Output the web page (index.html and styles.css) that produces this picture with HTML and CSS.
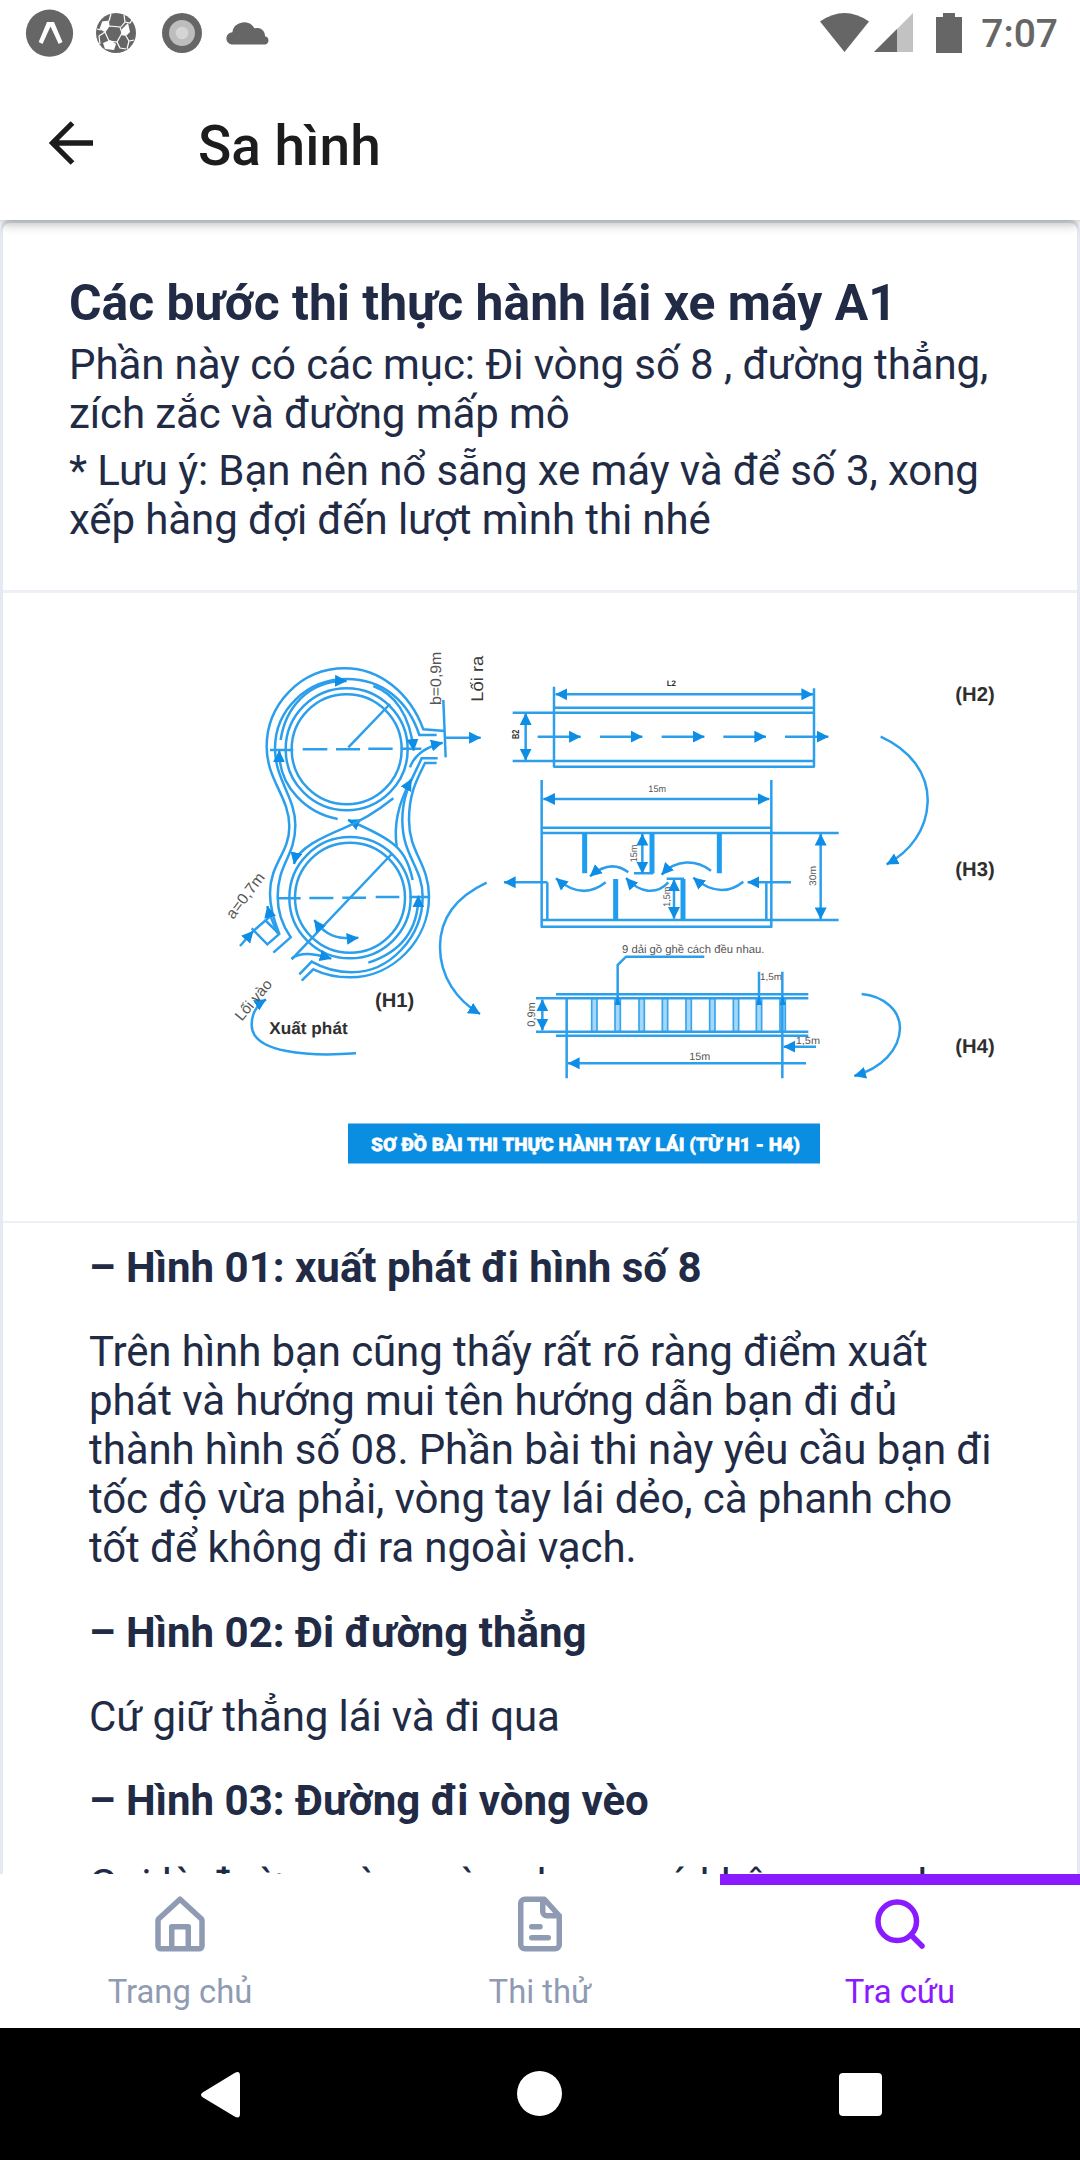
FILE: index.html
```html
<!DOCTYPE html>
<html lang="vi">
<head>
<meta charset="utf-8">
<title>Sa hình</title>
<link rel="stylesheet" href="styles.css">
</head>
<body>
<div class="screen">
  <div class="status-bar">
    <svg class="status-left" width="300" height="66" viewBox="0 0 300 66">
      <circle cx="49.5" cy="33.2" r="23.6" fill="#666"/>
      <path d="M47 22h7l8.500 20-3.800 2-8.200-17.500L42.500 44l-3.800-2z" fill="#fff"/>
      <circle cx="116" cy="33" r="20" fill="#666"/>
      <g fill="#fff">
        <path d="M102 22l7-1 .5 5-5 6-5-3z"/>
        <path d="M122 29l6-6 2 9-4 4-5-1z"/>
        <path d="M103 43l7-3 6 4-2 6-9-1z"/>
      </g>
      <g fill="none" stroke="#fff" stroke-width="1.200">
        <path d="M109 26l11 1 2 6-5 9-8-1-4-9zM109 21l2-7M109 21l-7 1M121 27l4-5-1-7M125 22l5 1 2-3M126 36l3 5 5-1M129 41l-2 8M117 42l3 6 6 1M105 32l-6 4 1 8M97 29l4 1"/>
      </g>
      <circle cx="182" cy="33" r="20" fill="#666"/>
      <circle cx="182" cy="33" r="13" fill="#bdbdbd"/>
      <circle cx="182" cy="33" r="6.300" fill="#d5d5d5"/>
      <path d="M231.500 44.500a6.200 6.200 0 0 1 .8-12.300A12 12 0 0 1 254.500 28.300a8 8 0 0 1 10.500 8 4.200 4.200 0 0 1 .3 8.200z" fill="#666"/>
    </svg>
    <div class="status-right">
      <svg width="150" height="66" viewBox="815 0 150 66">
        <path d="M821 21.500Q845.500 4.500 870 21.500L845.500 52z" fill="#666"/>
        <path d="M914 13v39h-39z" fill="#c2c2c2"/>
        <path d="M898 29v23h-23z" fill="#666"/>
        <path d="M944 13h12v4h7v36h-26V17h7z" fill="#666"/>
      </svg>
      <span class="clock">7:07</span>
    </div>
  </div>

  <header class="app-bar">
    <svg class="back" width="44" height="44" viewBox="0 0 44 44">
      <path d="M23.500 2L3.500 22l20 20M3.500 22H44" fill="none" stroke="#1c1c1e" stroke-width="5.300"/>
    </svg>
    <h1 class="app-title">Sa hình</h1>
  </header>

  <main class="content">
    <article class="card">
      <section class="intro">
        <h2 class="intro-title">Các bước thi thực hành lái xe máy A1</h2>
        <p class="text">Phần này có các mục: Đi vòng số 8 , đường thẳng, zích zắc và đường mấp mô</p>
        <p class="text">* Lưu ý: Bạn nên nổ sẵng xe máy và để số 3, xong xếp hàng đợi đến lượt mình thi nhé</p>
      </section>

      <figure class="diagram">
        <svg width="1074" height="628" viewBox="3 593 1074 628">
          <defs>
            <marker id="head" markerUnits="userSpaceOnUse" markerWidth="36" markerHeight="38" viewBox="0 0 34 36" refX="33" refY="18" orient="auto-start-reverse">
              <path d="M0 1L34 18L0 35z" fill="#0d8de6"/>
            </marker>
          </defs>

          <!-- H1: figure eight -->
          <g transform="translate(210 630) scale(.33333)">
            <g class="line">
              <circle cx="410" cy="358" r="165"/>
              <circle cx="410" cy="358" r="183"/>
              <circle cx="420" cy="803" r="165"/>
              <circle cx="420" cy="803" r="182"/>
              <path d="M705 303L640 298C600 190 510 115 405 115C270 115 170 225 170 350C170 450 238 500 238 590C238 670 180 700 180 790C180 840 195 880 208 912L172 943L125 895"/>
              <path d="M680 315H628C595 215 520 147 410 147C290 147 195 240 195 355C195 450 256 500 256 585C256 680 203 700 203 800C203 850 220 890 242 922L190 968"/>
              <path d="M680 399H645C620 450 597 490 597 570C597 670 657 700 657 800C657 930 550 1042 420 1042C370 1042 335 1030 310 1018L275 1052"/>
              <path d="M683 385H635C610 440 577 490 577 570C577 680 638 710 638 800C638 920 540 1027 425 1027C375 1027 340 1015 305 995L268 1033"/>
              <path d="M700 210L707 382M415 352L540 222M245 988L545 672M165 870L208 912"/>
              <path d="M180 360h70M278 358h74M378 358h72M475 356h73M572 356h62M203 805h69M298 804h72M397 803h71M497 801h71M598 801h57"/>
              <path d="M560 650C552 590 560 530 604 447" marker-end="url(#head)"/>
              <path d="M608 750C595 690 575 660 545 638C505 608 460 590 414 570" marker-end="url(#head)"/>
              <path d="M550 505C500 545 450 575 400 595C340 620 262 655 252 702" marker-end="url(#head)"/>
              <path d="M383 567C290 550 205 470 208 362" marker-end="url(#head)"/>
              <path d="M212 330C225 240 290 150 410 153" marker-end="url(#head)"/>
              <path d="M490 168C550 190 600 250 611 362" marker-end="url(#head)"/>
              <path d="M600 412C615 370 650 350 698 338" marker-end="url(#head)"/>
              <path d="M707 323H812" marker-end="url(#head)"/>
              <path d="M313 870C345 915 380 930 445 923" marker-start="url(#head)" marker-end="url(#head)"/>
              <path d="M245 985C275 965 310 970 364 986" marker-end="url(#head)"/>
              <path d="M475 998C560 970 625 910 625 797" marker-end="url(#head)"/>
              <path d="M90 948L130 903" marker-end="url(#head)"/>
              <path d="M130 903L185 855"/>
              <path d="M203 910C190 880 180 860 172 828" marker-end="url(#head)"/>
              <path d="M830 758C740 800 690 860 690 950C690 1040 740 1110 810 1152" marker-end="url(#head)"/>
              <path d="M438 1270C300 1280 125 1270 125 1185C125 1150 140 1125 168 1108" marker-end="url(#head)"/>
            </g>
            <text class="note" transform="translate(692 225) rotate(-90)" font-size="46" textLength="160" lengthAdjust="spacingAndGlyphs">b=0,9m</text>
            <text class="note dark" transform="translate(818 215) rotate(-90)" font-size="51" textLength="138" lengthAdjust="spacingAndGlyphs">Lối ra</text>
            <text class="note" transform="translate(70 870) rotate(-53)" font-size="46" textLength="160" lengthAdjust="spacingAndGlyphs">a=0,7m</text>
            <text class="note" transform="translate(95 1175) rotate(-50)" font-size="45" textLength="145" lengthAdjust="spacingAndGlyphs">Lối vào</text>
            <text class="label" x="495" y="1131" font-size="60" textLength="118" lengthAdjust="spacingAndGlyphs">(H1)</text>
            <text class="label" x="178" y="1211" font-size="51" textLength="235" lengthAdjust="spacingAndGlyphs">Xuất phát</text>
          </g>

          <!-- H2 and H3: straight lane, zigzag -->
          <g transform="translate(490 640) scale(.33333)">
            <g class="line">
              <path d="M192 140V381M972 145V381M192 203H972M68 218H972M68 363H972M190 380H974"/>
              <path d="M197 163H969" marker-start="url(#head)" marker-end="url(#head)"/>
              <path d="M107 220V361" marker-start="url(#head)" marker-end="url(#head)"/>
              <path d="M143 290H272" marker-end="url(#head)"/>
              <path d="M330 290H457" marker-end="url(#head)"/>
              <path d="M515 290H643" marker-end="url(#head)"/>
              <path d="M700 290H828" marker-end="url(#head)"/>
              <path d="M885 290H1015" marker-end="url(#head)"/>
              <path d="M155 420V860M844 420V860M155 563H844M155 579H1046M155 840H1046M152 860H847M172 727V840M829 727V840M432 700H490M530 716H582"/>
              <path d="M160 477H838" marker-start="url(#head)" marker-end="url(#head)"/>
              <path d="M172 727H42" marker-end="url(#head)"/>
              <path d="M903 727H773" marker-end="url(#head)"/>
              <path d="M457 582V700" marker-start="url(#head)" marker-end="url(#head)"/>
              <path d="M552 719V836" marker-start="url(#head)" marker-end="url(#head)"/>
              <path d="M992 582V837" marker-start="url(#head)" marker-end="url(#head)"/>
              <path d="M415 697C380 670 340 675 300 709" marker-end="url(#head)"/>
              <path d="M663 692C620 660 560 655 515 704" marker-end="url(#head)"/>
              <path d="M347 727C300 765 250 760 198 715" marker-end="url(#head)"/>
              <path d="M535 727C500 765 450 760 408 714" marker-end="url(#head)"/>
              <path d="M760 725C710 765 660 755 610 713" marker-end="url(#head)"/>
            </g>
            <path d="M284 579V700M486 579V700M688 579V700M377 717V840M579 717V840" stroke="#1f9ef0" stroke-width="15"/>
            <text class="label" x="530" y="137" font-size="24" textLength="28" lengthAdjust="spacingAndGlyphs">L2</text>
            <text class="label" transform="translate(88 297) rotate(-90)" font-size="30" textLength="28" lengthAdjust="spacingAndGlyphs">B2</text>
            <text class="note" x="475" y="457" font-size="28" textLength="53" lengthAdjust="spacingAndGlyphs">15m</text>
            <text class="note" transform="translate(441 667) rotate(-90)" font-size="29" textLength="53" lengthAdjust="spacingAndGlyphs">15m</text>
            <text class="note" transform="translate(541 800) rotate(-90)" font-size="29" textLength="60" lengthAdjust="spacingAndGlyphs">1,5m</text>
            <text class="note" transform="translate(978 738) rotate(-90)" font-size="29" textLength="60" lengthAdjust="spacingAndGlyphs">30m</text>
          </g>

          <!-- H4: bumpy road -->
          <g transform="translate(500 920) scale(.33333)">
            <g class="posts">
              <rect x="275" y="235" width="16" height="100"/>
              <rect x="345" y="235" width="16" height="100"/>
              <rect x="417" y="235" width="16" height="100"/>
              <rect x="487" y="235" width="16" height="100"/>
              <rect x="558" y="235" width="16" height="100"/>
              <rect x="629" y="235" width="16" height="100"/>
              <rect x="700" y="235" width="16" height="100"/>
              <rect x="769" y="235" width="16" height="100"/>
              <rect x="840" y="235" width="16" height="100"/>
            </g>
            <g class="line">
              <path d="M168 223H925M108 235H925M108 335H925M168 347H925M200 235V475M847 155V475M777 155V250M353 250V135L378 110H613"/>
              <path d="M127 239V331" marker-start="url(#head)" marker-end="url(#head)"/>
              <path d="M948 380H851" marker-end="url(#head)"/>
              <path d="M918 430H204" marker-end="url(#head)"/>
            </g>
            <path d="M353 225l9 30h-18zM777 225l9 30h-18zM848 225l9 30h-18z" fill="#0d8de6"/>
            <text class="note" x="366" y="99" font-size="34" textLength="427" lengthAdjust="spacingAndGlyphs">9 dải gồ ghề cách đều nhau.</text>
            <text class="note" x="780" y="180" font-size="29" textLength="66" lengthAdjust="spacingAndGlyphs">1,5m</text>
            <text class="note" x="887" y="372" font-size="31" textLength="73" lengthAdjust="spacingAndGlyphs">1,5m</text>
            <text class="note" x="568" y="420" font-size="32" textLength="63" lengthAdjust="spacingAndGlyphs">15m</text>
            <text class="note" transform="translate(105 320) rotate(-90)" font-size="33" textLength="73" lengthAdjust="spacingAndGlyphs">0,9m</text>
          </g>

          <!-- links between the figures -->
          <g transform="translate(800 640) scale(.33333)">
            <g class="line">
              <path d="M242 290C330 330 385 400 383 485C380 570 330 635 260 673" marker-end="url(#head)"/>
              <path d="M185 1062C250 1068 300 1110 300 1165C298 1230 245 1285 163 1308" marker-end="url(#head)"/>
            </g>
            <text class="label" x="466" y="182" font-size="60" textLength="118" lengthAdjust="spacingAndGlyphs">(H2)</text>
            <text class="label" x="466" y="709" font-size="60" textLength="118" lengthAdjust="spacingAndGlyphs">(H3)</text>
            <text class="label" x="466" y="1239" font-size="60" textLength="118" lengthAdjust="spacingAndGlyphs">(H4)</text>
          </g>

          <rect x="348" y="1123.500" width="472" height="40" fill="#098ee2"/>
          <text class="banner" x="371" y="1151" font-size="18.500" textLength="429" lengthAdjust="spacingAndGlyphs">SƠ ĐỒ BÀI THI THỰC HÀNH TAY LÁI (TỪ H1 - H4)</text>
        </svg>
      </figure>

      <section class="steps">
        <p class="text strong">– Hình 01: xuất phát đi hình số 8</p>
        <p class="text">Trên hình bạn cũng thấy rất rõ ràng điểm xuất phát và hướng mui tên hướng dẫn bạn đi đủ thành hình số 08. Phần bài thi này yêu cầu bạn đi tốc độ vừa phải, vòng tay lái dẻo, cà phanh cho tốt để không đi ra ngoài vạch.</p>
        <p class="text strong">– Hình 02: Đi đường thẳng</p>
        <p class="text">Cứ giữ thẳng lái và đi qua</p>
        <p class="text strong">– Hình 03: Đường đi vòng vèo</p>
        <p class="text">Gọi là đường vòng vèo nhưng nó không quanh</p>
      </section>
    </article>
  </main>

  <nav class="tabs">
    <div class="tab">
      <svg class="tab-icon" viewBox="0 0 24 24"><path d="M5 21h14a1 1 0 0 0 1-1v-9.200a1 1 0 0 0-.28-.7L12 3l-7.720 7.100a1 1 0 0 0-.28.7V20a1 1 0 0 0 1 1zM9 21v-8h6v8"/></svg>
      <span>Trang chủ</span>
    </div>
    <div class="tab">
      <svg class="tab-icon" viewBox="0 0 24 24"><path d="M13.600 3H6.500A1.500 1.500 0 0 0 5 4.500v15A1.500 1.500 0 0 0 6.500 21h11a1.500 1.500 0 0 0 1.500-1.500V9zM13 3v4.500A1.500 1.500 0 0 0 14.500 9H19M9 13h3M9 17h6"/></svg>
      <span>Thi thử</span>
    </div>
    <div class="tab active">
      <svg class="tab-icon" viewBox="0 0 24 24"><circle cx="11" cy="11" r="7"/><path d="M16 16l4 4"/></svg>
      <span>Tra cứu</span>
    </div>
  </nav>

  <div class="system-nav">
    <svg width="1080" height="132" viewBox="0 2028 1080 132" fill="#fff">
      <path d="M203 2092.200l32-19.400q5-2.500 5 3v38q0 5.500-5 3l-32-19.400q-4-2.600 0-5.200z"/>
      <circle cx="539.500" cy="2093.500" r="22.500"/>
      <rect x="839" y="2073" width="43" height="43" rx="4"/>
    </svg>
  </div>
</div>
</body>
</html>
```
FILE: styles.css
```css
* {
  box-sizing: border-box;
}

body {
  margin: 0;
  font-family: Roboto, sans-serif;
  background: #fff;
  color: #222b45;
}

h1, h2, p, figure {
  margin: 0;
}

svg {
  display: block;
  flex: none;
}

.screen {
  display: flex;
  flex-direction: column;
  width: 1080px;
  height: 2160px;
  overflow: hidden;
}

.status-bar {
  display: flex;
  justify-content: space-between;
  flex: none;
  height: 66px;
  background: #fff;
  z-index: 2;
}

.status-right {
  display: flex;
  gap: 17px;
  padding-right: 22px;
}

.clock {
  font-size: 39px;
  font-weight: 500;
  line-height: 69px;
  color: #666;
}

.app-bar {
  display: flex;
  align-items: center;
  flex: none;
  gap: 105px;
  height: 154px;
  padding-left: 49px;
  background: #fff;
  box-shadow: 0 2px 12px rgba(0, 0, 0, .38);
  z-index: 1;
}

.app-title {
  padding-top: 5px;
  font-size: 55px;
  font-weight: 500;
  line-height: 64px;
  color: #1c1c1e;
}

.content {
  flex: 1;
  min-height: 0;
  overflow: hidden;
}

.card {
  border: 3px solid #e4e9f2;
  border-radius: 10px;
}

.intro {
  display: flex;
  flex-direction: column;
  gap: 8px;
  height: 370px;
  padding: 51px 63px 0 66px;
  border-bottom: 3px solid #edf1f7;
}

.intro-title {
  font-size: 49.8px;
  font-weight: 700;
  line-height: 58px;
}

.text {
  font-size: 42px;
  line-height: 49px;
  letter-spacing: -.1px;
}

.strong {
  font-weight: 700;
  letter-spacing: 0;
}

.diagram {
  border-bottom: 2px solid #edf1f7;
}

.line {
  fill: none;
  stroke: #2c9fec;
  stroke-width: 7.5;
}

.posts {
  fill: #a5d8f8;
  stroke: #36a5ee;
  stroke-width: 5;
}

.note,
.label {
  font-family: "Liberation Sans", sans-serif;
  text-rendering: geometricPrecision;
  fill: #555;
}

.note.dark {
  fill: #3a3a3a;
}

.label {
  font-weight: 700;
  fill: #2f2f2f;
}

.banner {
  font-weight: 900;
  text-rendering: geometricPrecision;
  fill: #fff;
  stroke: #fff;
  stroke-width: .5;
}

.steps {
  display: flex;
  flex-direction: column;
  gap: 35.3px;
  padding: 20px 76px 20px 86px;
}

.tabs {
  display: flex;
  flex: none;
  height: 154px;
  background: #fff;
}

.tab {
  display: flex;
  flex: 1;
  flex-direction: column;
  align-items: center;
  gap: 16px;
  padding-top: 6px;
  border-top: 11px solid transparent;
  font-size: 32.8px;
  line-height: 38px;
  color: #8f9bb3;
}

.tab.active {
  border-top-color: #8a1aff;
  color: #8a1aff;
}

.tab-icon {
  width: 66px;
  height: 66px;
  fill: none;
  stroke: currentColor;
  stroke-width: 2;
  stroke-linecap: round;
  stroke-linejoin: round;
}

.system-nav {
  flex: none;
  height: 132px;
  background: #000;
}
```
